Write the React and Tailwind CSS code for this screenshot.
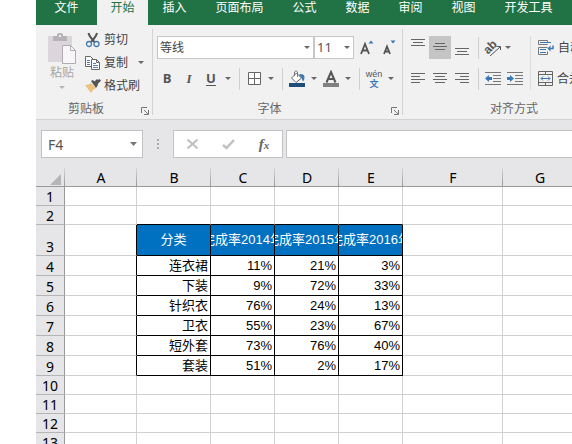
import { useState } from "react";

const tabs = [
  { name: "文件", width: "w-[61px]" },
  { name: "开始", width: "w-[51px]" },
  { name: "插入", width: "w-[53px]" },
  { name: "页面布局", width: "w-[77px]" },
  { name: "公式", width: "w-[53px]" },
  { name: "数据", width: "w-[53px]" },
  { name: "审阅", width: "w-[53px]" },
  { name: "视图", width: "w-[53px]" },
  { name: "开发工具", width: "w-[77px]" },
];

const columns = ["A", "B", "C", "D", "E", "F", "G"];

const header = ["分类", "完成率2014年", "完成率2015年", "完成率2016年"];

const data = [
  ["连衣裙", "11%", "21%", "3%"],
  ["下装", "9%", "72%", "33%"],
  ["针织衣", "76%", "24%", "13%"],
  ["卫衣", "55%", "23%", "67%"],
  ["短外套", "73%", "76%", "40%"],
  ["套装", "51%", "2%", "17%"],
];

const rowNumbers = Array.from({ length: 40 }, (_, i) => i + 1);

const toolClass = "flex h-[23px] w-[22px] shrink-0 items-center justify-center text-[#555]";
const clipClass = "flex h-[23px] items-center gap-[3px] whitespace-nowrap";

function Caret({ className = "text-[#666]" }) {
  return (
    <svg width="6" height="3" viewBox="0 0 6 3" className={className} fill="currentColor">
      <path d="M0 0h6L3 3z" />
    </svg>
  );
}

function CaretButton({ label, width = "w-3" }) {
  return (
    <button aria-label={label} className={`flex h-[23px] shrink-0 items-center justify-center ${width}`}>
      <Caret />
    </button>
  );
}

function Divider() {
  return <div className="mr-[3px] ml-[5px] h-[22px] w-px shrink-0 bg-[#d0d0d0]" />;
}

// ribbon group: tools on top, caption and launcher below
function Group({ title, width, children }) {
  return (
    <section className={`flex shrink-0 flex-col pt-[3px] ${width}`}>
      <div className="h-[71px]">{children}</div>
      <div className="flex h-[18px] items-center">
        <h2 className="flex-1 pt-0.5 text-center text-[#666]">{title}</h2>
        <button aria-label={`${title}设置`} className="flex h-full w-4 items-end pb-0.5 pl-[5px]">
          <svg width="8" height="8" viewBox="0 0 8 8" fill="none" stroke="#777">
            <path d="M.5 6V.5H6M3 3l4 4M7.5 3v4.500H3" />
          </svg>
        </button>
      </div>
    </section>
  );
}

// paragraph icon, each line is [x, y, width]
function Lines({ rows }) {
  return (
    <svg width="14" height="17" viewBox="0 0 14 17" fill="#666">
      {rows.map(([x, y, w]) => <rect key={y} x={x} y={y} width={w} height="1" />)}
    </svg>
  );
}

function PasteIcon() {
  return (
    <svg width="28" height="31" viewBox="0 0 28 31">
      <path d="M0 3h24v26H0z" fill="#dcd6dc" />
      <path d="M5 3h4V1q3-2 6 0v2h4v5H5z" fill="#b5b3b5" />
      <path d="M11 2h2v2h-2z" fill="#f1f1f1" />
      <path d="M14.500 12.500h8l5 5v13h-13z" fill="#f8f6f8" stroke="#b0adb0" />
      <path d="M22.500 12.500v5h5" fill="none" stroke="#b0adb0" />
    </svg>
  );
}

function CutIcon() {
  return (
    <svg width="16" height="16" viewBox="0 0 16 16" fill="none">
      <path d="M3.500 1Q4 4 9.500 10M12 1q-.5 3-6 9" stroke="#555" strokeWidth="2" />
      <circle cx="4" cy="12" r="2.500" stroke="#4a7ba8" strokeWidth="1.300" />
      <circle cx="11.500" cy="12" r="2.500" stroke="#4a7ba8" strokeWidth="1.300" />
    </svg>
  );
}

function CopyIcon() {
  return (
    <svg width="16" height="16" viewBox="0 0 16 16" fill="#fff" stroke="#666">
      <path d="M.5 1.500h5l3 3v7h-8z" />
      <path d="M2 5.500h3M2 7.500h3M2 9.500h3" stroke="#4a7ebb" />
      <path d="M6.500 4.500h5l3 3v7h-8z" />
      <path d="M11.500 4.500v3h3" fill="none" />
      <path d="M8 8.500h3M8 10.500h5M8 12.500h5" stroke="#4a7ebb" />
    </svg>
  );
}

function BrushIcon() {
  return (
    <svg width="16" height="16" viewBox="0 0 16 16">
      <path d="M0 7q4 0 6-2l5 5q-3 1-5 5z" fill="#edc27e" />
      <path d="m6 3 2-1 5 5-2 3zM9 4l3-3 1 1 1.500-1L16 2.500 12 7z" fill="#555" />
    </svg>
  );
}

function ClipboardGroup() {
  return (
    <Group title="剪贴板" width="w-[116px]">
      <div className="flex pl-[10px]">
        <button className="flex h-[70px] w-8 shrink-0 flex-col items-center pt-[5px] text-[#a6a6a6]">
          <PasteIcon />
          <span className="mb-1 leading-[18px]">粘贴</span>
          <Caret className="text-[#b5b5b5]" />
        </button>
        <div className="ml-[7px] flex shrink-0 flex-col text-[#444]">
          <button className={clipClass}><CutIcon />剪切</button>
          <div className="flex">
            <button className={clipClass}><CopyIcon />复制</button>
            <CaretButton label="复制选项" width="w-[25px]" />
          </div>
          <button className={clipClass}><BrushIcon />格式刷</button>
        </div>
      </div>
    </Group>
  );
}

function FontGroup() {
  return (
    <Group title="字体" width="w-[249px]">
      <div className="flex flex-col gap-2 pt-2 pl-[3px]">
        <div className="flex pl-px">
          <div className="relative">
            <select aria-label="字体" className="h-[23px] w-[157px] appearance-none border border-[#c6c6c6] bg-white pl-0.5 text-[#444]">
              <option>等线</option>
            </select>
            <span className="pointer-events-none absolute top-[10px] right-1"><Caret /></span>
          </div>
          <div className="relative">
            <select aria-label="字号" className="h-[23px] w-10 appearance-none border border-[#c6c6c6] bg-white pl-0.5 font-['Noto_Sans'] text-[13px] text-[#555]">
              <option>11</option>
            </select>
            <span className="pointer-events-none absolute top-[10px] right-1"><Caret /></span>
          </div>
          <button aria-label="增大字号" className="ml-0.5 flex h-[23px] w-[22px] items-center justify-center">
            <svg width="14" height="15" viewBox="0 0 14 15">
              <path d="m1 14 4-10 4 10M2.500 10.500h5" fill="none" stroke="#555" strokeWidth="1.800" />
              <path d="M8.500 3.500h5L11 .5z" fill="#3b78b8" />
            </svg>
          </button>
          <button aria-label="减小字号" className="flex h-[23px] w-[22px] items-center justify-center">
            <svg width="14" height="15" viewBox="0 0 14 15">
              <path d="m2 14 3-7.500L8 14M3 11.500h4" fill="none" stroke="#555" strokeWidth="1.800" />
              <path d="M8.500.5h5L11 3.500z" fill="#3b78b8" />
            </svg>
          </button>
        </div>
        <div className="flex items-center font-['Open_Sans'] text-[13px]">
          <button className={`${toolClass} font-bold`}>B</button>
          <button className={`${toolClass} font-['Liberation_Serif'] font-bold italic`}>I</button>
          <button className={`${toolClass} font-bold underline underline-offset-2`}>U</button>
          <CaretButton label="下划线选项" />
          <Divider />
          <button aria-label="边框" className={toolClass}>
            <svg width="13" height="13" viewBox="0 0 13 13" fill="#fff" stroke="#666">
              <path d="M.5.5h12v12H.5zM6.500.5v12M.5 6.500h12" />
            </svg>
          </button>
          <CaretButton label="边框选项" />
          <Divider />
          <button aria-label="填充颜色" className={toolClass}>
            <svg width="16" height="17" viewBox="0 0 16 17">
              <path d="M11 4q4.500 0 4.500 3T14 11.500q-1-4-4-6z" fill="#3b78b8" />
              <path d="m7.500 3 5 5-5.500 4.500L2.500 8z" fill="#fff" stroke="#666" />
              <path d="M5.500 6V2Q7-.5 8.500 2v5" fill="none" stroke="#777" />
              <path d="M0 13h16v4H0z" fill="#1f4e79" />
            </svg>
          </button>
          <CaretButton label="填充颜色选项" />
          <button aria-label="字体颜色" className={toolClass}>
            <svg width="16" height="17" viewBox="0 0 16 17">
              <path d="M3.500 12.500 8 2l4.500 10.500M5 9h6" fill="none" stroke="#555" strokeWidth="2" />
              <path d="M0 13h16v4H0z" fill="#808080" />
            </svg>
          </button>
          <CaretButton label="字体颜色选项" />
          <Divider />
          <button className="flex h-[23px] w-[22px] shrink-0 flex-col items-center justify-center font-['Noto_Sans_CJK_SC'] text-[9px] leading-[10px] text-[#555]">
            <span className="font-['Liberation_Sans']">wén</span>
            <span className="font-bold text-[#3b78b8]">文</span>
          </button>
          <CaretButton label="拼音选项" />
        </div>
      </div>
    </Group>
  );
}

function AlignGroup() {
  return (
    <Group title="对齐方式" width="w-[238px]">
      <div className="flex pt-2 pl-1">
        <div className="flex flex-col gap-2">
          <div className="flex items-center">
            <button aria-label="顶端对齐" className={toolClass}><Lines rows={[[0, 0, 14], [2, 3, 10], [0, 6, 14]]} /></button>
            <button aria-label="垂直居中" className={`${toolClass} bg-[#c5c5c5]`}><Lines rows={[[2, 4, 10], [0, 7, 14], [2, 10, 10]]} /></button>
            <button aria-label="底端对齐" className={toolClass}><Lines rows={[[0, 9, 14], [2, 12, 10], [0, 15, 14]]} /></button>
            <Divider />
            <button aria-label="方向" className={toolClass}>
              <svg width="18" height="18" viewBox="0 0 18 18" fill="none" stroke="#555">
                <text x="-1" y="12" transform="rotate(-45 6 8)" className="fill-[#555] stroke-none font-['Liberation_Sans'] text-[12px] font-bold">ab</text>
                <path d="m6 17 10-9M12.500 7.500h4V11" />
              </svg>
            </button>
            <CaretButton label="方向选项" width="w-2" />
          </div>
          <div className="flex items-center">
            <button aria-label="左对齐" className={toolClass}><Lines rows={[[0, 3, 14], [0, 6, 9], [0, 9, 14], [0, 12, 9]]} /></button>
            <button aria-label="居中" className={toolClass}><Lines rows={[[0, 3, 14], [2, 6, 10], [0, 9, 14], [2, 12, 10]]} /></button>
            <button aria-label="右对齐" className={toolClass}><Lines rows={[[0, 3, 14], [5, 6, 9], [0, 9, 14], [5, 12, 9]]} /></button>
            <Divider />
            <button aria-label="减少缩进量" className={toolClass}>
              <svg width="16" height="13" viewBox="0 0 16 13">
                <path d="M0 0h16v1H0zM8 3h8v1H8zM8 6h8v1H8zM8 9h8v1H8zM0 12h16v1H0z" fill="#777" />
                <path d="m0 6.500 4-3.500v2h3v3H4v2z" fill="#3b78b8" />
              </svg>
            </button>
            <button aria-label="增加缩进量" className={toolClass}>
              <svg width="16" height="13" viewBox="0 0 16 13">
                <path d="M0 0h16v1H0zM8 3h8v1H8zM8 6h8v1H8zM8 9h8v1H8zM0 12h16v1H0z" fill="#777" />
                <path d="M7 6.500 3 3v2H0v3h3v2z" fill="#3b78b8" />
              </svg>
            </button>
          </div>
        </div>
        <div className="ml-1 w-px shrink-0 bg-[#dcdcdc]" />
        <div className="flex flex-col gap-2 pl-[7px] text-[#444]">
          <button className="flex h-[23px] items-center gap-1 whitespace-nowrap">
            <svg width="16" height="15" viewBox="0 0 16 15" fill="none">
              <path d="M9.500 2V.5h-9v4h9V4M9.500 7.500h-9v7h9v-3" stroke="#777" />
              <path d="M2 2.500h11M2 9.500h6M2 12.500h6" stroke="#3b78b8" />
              <path d="M15 5.500v3h-3" stroke="#3b78b8" strokeWidth="1.500" />
              <path d="m9.500 8.500 3-3v6z" fill="#3b78b8" />
            </svg>
            自动换行
          </button>
          <button className="flex h-[23px] items-center gap-1 whitespace-nowrap">
            <svg width="15" height="15" viewBox="0 0 15 15" fill="none">
              <path d="M.5.5h14v14H.5zM.5 3.500h14M.5 11.500h14M7.500.5v3M7.500 11.500v3" stroke="#666" />
              <path d="M3 7.500h9M5 5.500l-2 2 2 2M10 5.500l2 2-2 2" stroke="#3b78b8" />
            </svg>
            合并后居中
          </button>
        </div>
      </div>
    </Group>
  );
}

function FormulaBar() {
  const [cell, setCell] = useState("F4");
  return (
    <div className="flex items-center bg-[#e6e5e7] py-[10px] pl-[5px]">
      <div className="relative">
        <input
          aria-label="名称框" value={cell}
          onChange={(e) => setCell(e.target.value)}
          className="block h-7 w-[102px] border border-[#c3c3c5] bg-white pl-1.5 font-['Noto_Sans'] text-[14px] text-[#555]"
        />
        <span className="pointer-events-none absolute top-3 right-1.5">
          <svg width="7" height="4" viewBox="0 0 7 4" fill="#777"><path d="M0 0h7L3.500 4z" /></svg>
        </span>
      </div>
      <div className="flex w-[30px] justify-center">
        <svg width="2" height="10" viewBox="0 0 2 10" fill="#a9a9a9">
          <path d="M0 0h2v2H0zM0 4h2v2H0zM0 8h2v2H0z" />
        </svg>
      </div>
      <div className="flex h-7 w-[110px] shrink-0 border border-[#c3c3c5] bg-white">
        <button aria-label="取消" className="flex flex-1 items-center justify-center">
          <svg width="11" height="10" viewBox="0 0 11 10" stroke="#c0c0c0" strokeWidth="2"><path d="m.5.5 10 9M10.500.5l-10 9" /></svg>
        </button>
        <button aria-label="输入" className="flex flex-1 items-center justify-center">
          <svg width="13" height="11" viewBox="0 0 13 11" fill="none" stroke="#c0c0c0" strokeWidth="2.500"><path d="m1 6 3.500 3L12 1" /></svg>
        </button>
        <button aria-label="插入函数" className="flex-1 font-['Liberation_Serif'] text-[15px] font-bold text-[#666] italic">
          f<span className="text-[11px]">x</span>
        </button>
      </div>
      <input aria-label="编辑栏" className="ml-[3px] h-7 min-w-0 flex-1 border border-r-0 border-[#c3c3c5] bg-white px-2 text-[13px]" />
    </div>
  );
}

// text and border/fill classes of one grid cell
function cellLook(row, col) {
  const inTable = row >= 3 && row <= 9 && col >= 1 && col <= 4;
  const right = inTable || (row >= 3 && row <= 9 && col === 0) ? "border-r-black" : "border-r-[#d0d0d0]";
  const bottom = inTable || (row === 2 && col >= 1 && col <= 4) ? "border-b-black" : "border-b-[#d0d0d0]";
  if (inTable && row === 3) return { text: header[col - 1], look: `${right} ${bottom} bg-[#0070c0] text-white` };
  if (inTable) return { text: data[row - 4][col - 1], look: `${right} ${bottom}` };
  return { text: "", look: `${right} ${bottom}` };
}

function rowHeight(row) {
  if (row === 3) return "h-[31px]";
  return row >= 4 && row <= 9 ? "h-5" : "h-[19px]";
}

function Sheet() {
  return (
    <table className="w-full min-w-[541px] table-fixed border-separate border-spacing-0 text-[13px] leading-4 text-black">
      <colgroup>
        <col className="w-[29px]" />
        <col className="w-[72px]" />
        <col className="w-[74px]" />
        <col className="w-16" />
        <col className="w-16" />
        <col className="w-16" />
        <col className="w-[100px]" />
        <col />
      </colgroup>
      <thead className="bg-[#e6e5e7] font-['Noto_Sans'] text-[14px]">
        <tr className="h-[19px]">
          <td className="border-b border-[#999] bg-linear-to-b from-[#d5d5d5] to-[#999] bg-[length:1px_100%] bg-right bg-no-repeat p-0">
            <svg className="mt-1 mr-1 ml-auto" width="11" height="11" viewBox="0 0 11 11" fill="#b5b5b5"><path d="M11 0v11H0z" /></svg>
          </td>
          {columns.map((name) => (
            <th key={name} scope="col" className="border-b border-[#999] bg-linear-to-b from-[#d5d5d5] to-[#999] bg-[length:1px_100%] bg-right bg-no-repeat p-0 align-bottom font-normal">
              {name}
            </th>
          ))}
        </tr>
      </thead>
      <tbody>
        {rowNumbers.map((row) => (
          <tr key={row} className={rowHeight(row)}>
            <th scope="row" className="border-r border-b border-r-[#999] border-b-[#b5b5b5] bg-[#e6e5e7] p-0 align-bottom font-['Noto_Sans'] text-[14px] font-normal">
              {row}
            </th>
            {columns.map((name, col) => {
              const { text, look } = cellLook(row, col);
              return (
                <td key={name} className={`border-r border-b p-0 ${look}`}>
                  <div className={`flex overflow-hidden whitespace-nowrap ${row === 3 ? "justify-center" : "justify-end pr-0.5"}`}>
                    {text}
                  </div>
                </td>
              );
            })}
          </tr>
        ))}
      </tbody>
    </table>
  );
}

export default function App() {
  const [active, setActive] = useState("开始");

  return (
    <div className="h-screen overflow-hidden bg-white pl-9 font-['Liberation_Sans','Noto_Sans_CJK_SC',sans-serif] text-[12px]">
      {/* TABS */}
      <nav className="flex h-[25px] overflow-hidden bg-[#217346]">
        {tabs.map((tab) => (
          <button
            key={tab.name}
            onClick={() => setActive(tab.name)}
            className={`flex shrink-0 justify-center leading-4 ${tab.width} ${active === tab.name ? "bg-[#f1f1f1] text-[#217346]" : "text-white"}`}
          >
            {tab.name}
          </button>
        ))}
      </nav>

      {/* RIBBON */}
      <div className="flex overflow-hidden border-b border-[#d2d2d2] bg-[#f1f1f1] pb-0.5">
        <ClipboardGroup />
        <div className="mt-1 mb-0.5 w-px shrink-0 bg-[#d2d2d2]" />
        <FontGroup />
        <div className="mt-1 mb-0.5 w-px shrink-0 bg-[#d2d2d2]" />
        <AlignGroup />
      </div>

      <FormulaBar />
      <div className="overflow-hidden">
        <Sheet />
      </div>
    </div>
  );
}
